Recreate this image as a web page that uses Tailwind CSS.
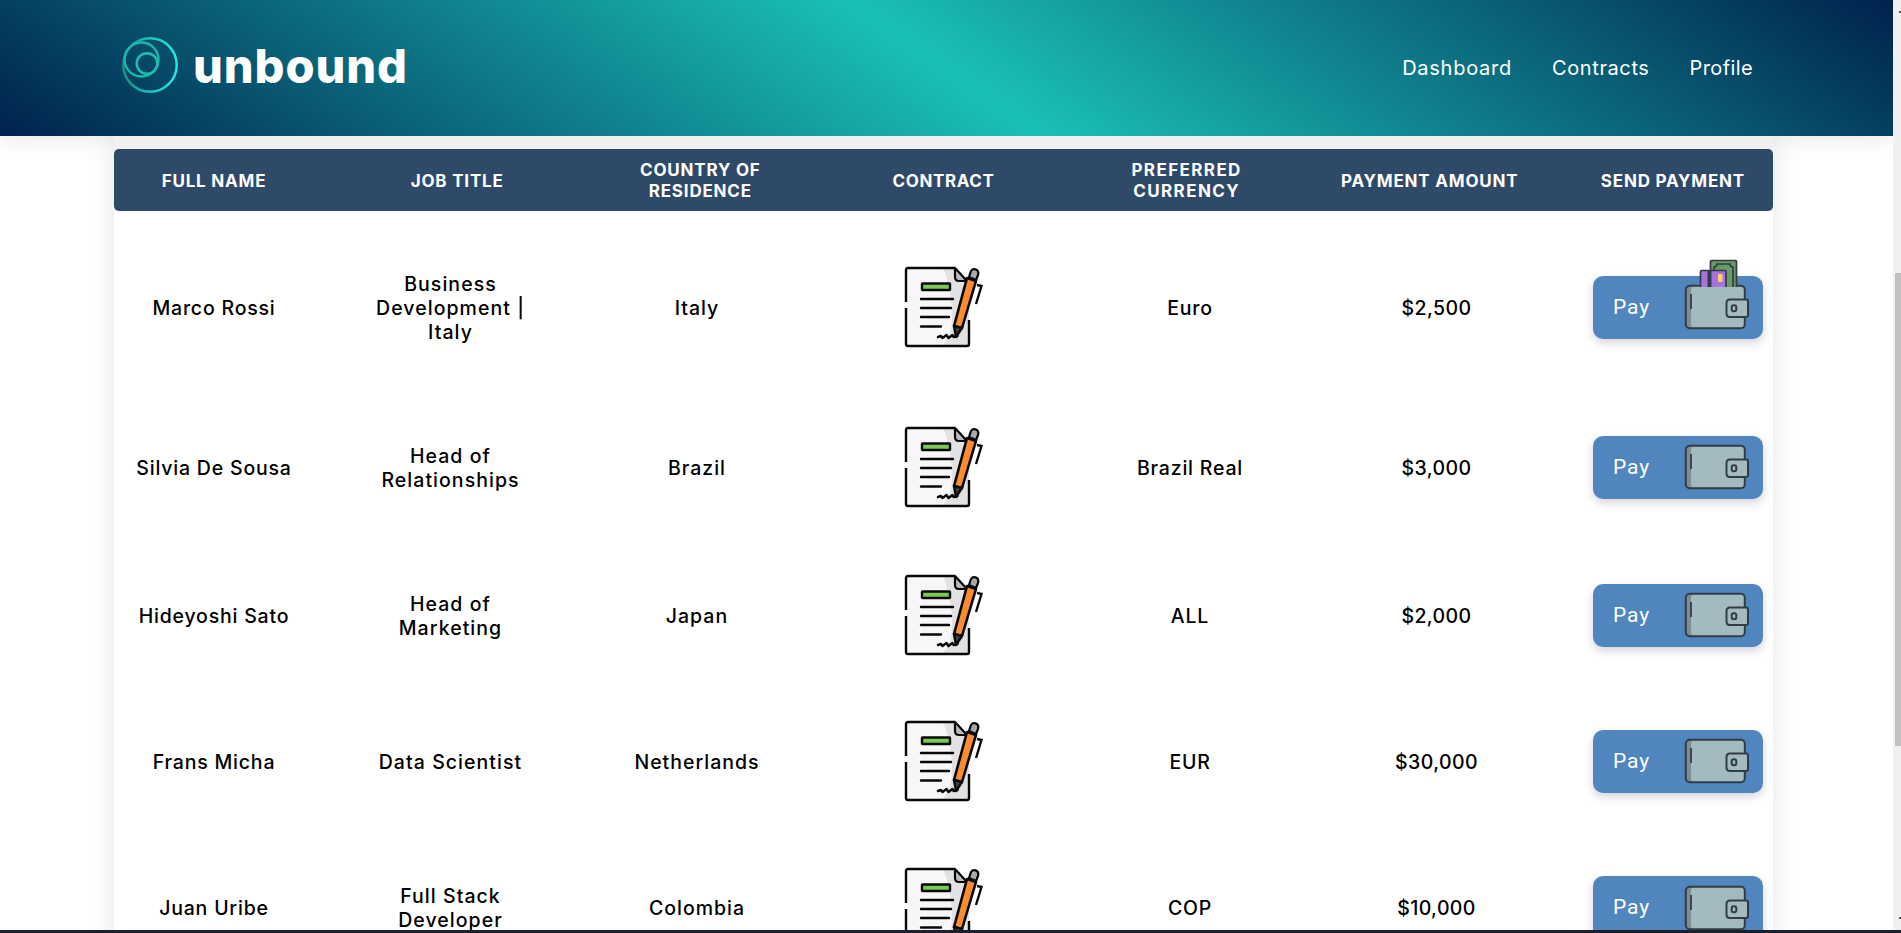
<!DOCTYPE html>
<html lang="en">
<head>
<meta charset="utf-8">
<title>unbound</title>
<script src="https://cdn.jsdelivr.net/npm/@tailwindcss/browser@4"></script>
</head>
<body class="h-[933px] overflow-hidden bg-white font-['Inter',sans-serif] text-black">
<svg class="hidden">
  <defs>
    <symbol id="contract" viewBox="0 0 84 84">
      <path d="M3 2H52L66 16V80H3Z" fill="#f8f6f8"/>
      <path d="M43 2H52L66 16V80H38Q50 72 49 46T40 2Z" fill="#e2e1e3"/>
      <path d="M3 36V4Q3 2 5 2H52M3 42V78Q3 80 5 80H64Q66 80 66 78V54" fill="none" stroke="#080808" stroke-width="2.4"/>
      <path d="M52 2V11Q52 15 56 15H64Z" fill="#bbb" stroke="#080808" stroke-width="2.2" stroke-linejoin="round"/>
      <rect x="19" y="17.500" width="28" height="6.500" rx="0.500" fill="#78cb52" stroke="#080808" stroke-width="2.4"/>
      <path d="M18 33H50M18 42H48M18 51H46M18 60.500H38" stroke="#080808" stroke-width="2.4" stroke-linecap="round"/>
      <path d="M35 71l3-1 1.500 2 4-3 2 3 4-3 1 2 4-1" fill="none" stroke="#080808" stroke-width="2.4" stroke-linecap="round" stroke-linejoin="round"/>
      <path d="M51 60L64 12L73 15L59 62Z" fill="#fb8d2e" stroke="#080808" stroke-width="2.6" stroke-linejoin="round"/>
      <path d="M51 60L59 62L53 71Z" fill="#444" stroke="#080808" stroke-width="2.4" stroke-linejoin="round"/>
      <path d="M66 11L68 5Q70 2 74 4Q76 6 75 9L73 14Z" fill="#aaa" stroke="#080808" stroke-width="2.2"/>
      <path d="M74 19L78.500 20L73 38" fill="none" stroke="#080808" stroke-width="2.400"/>
    </symbol>
    <symbol id="wallet" viewBox="0 0 66 46">
      <rect x="1.800" y="1.800" width="59" height="42.400" rx="4" fill="#a3bbc0"/>
      <path d="M9 2H5.800Q1.800 2 1.800 6V40Q1.800 44 5.800 44H9Q7 43 7 40V6Q7 3 9 2Z" fill="#7c8f91"/>
      <rect x="1.800" y="1.800" width="59" height="42.400" rx="4" fill="none" stroke="#323c45" stroke-width="2"/>
      <path d="M7 10V25" stroke="#323c45" stroke-width="1.800"/>
      <path d="M46 15.500H62Q64 15.500 64 17.500V31Q64 33 62 33H46Q42.500 33 42.500 29.500V19Q42.500 15.500 46 15.500Z" fill="#a3bbc0" stroke="#323c45" stroke-width="2"/>
      <rect x="47.700" y="21.300" width="4.600" height="6" rx="2" fill="none" stroke="#323c45" stroke-width="2"/>
    </symbol>
    <symbol id="cash" viewBox="0 0 40 28">
      <rect x="11.500" y="1.500" width="26" height="30" rx="1" fill="#699b64" stroke="#323c45" stroke-width="1.700"/>
      <path d="M15 12V8Q18 8 18 5H31Q31 8 34 8V28" fill="none" stroke="#323c45" stroke-width="1.700"/>
      <rect x="1.500" y="11.500" width="25.500" height="20" rx="1" fill="#a970e0" stroke="#323c45" stroke-width="1.700"/>
      <path d="M10.500 11V28" stroke="#323c45" stroke-width="4"/>
      <rect x="19" y="15" width="4.500" height="8" rx="1" fill="#fdd45c"/>
    </symbol>
  </defs>
</svg>

<div class="flex h-[930px] overflow-hidden">
  <div class="h-full w-[1893px] overflow-hidden">
    <nav class="relative flex h-[136px] items-center justify-between bg-[linear-gradient(35deg,#00224c_0%,#1ac0b7_50%,#00224c_100%)] pr-[140px] pl-[122px] text-white shadow-[0_0_25px_rgba(0,0,0,0.12)]">
      <div class="flex items-center">
        <svg class="mt-[-6px] h-[56px] w-[56px]" viewBox="0 0 56 56" fill="none" stroke-width="2.4">
          <defs><linearGradient id="ring"><stop stop-color="#159488"/><stop offset="1" stop-color="#22eee8"/></linearGradient></defs>
          <circle cx="28" cy="28" r="26.700" stroke="url(#ring)"/>
          <circle cx="19.500" cy="22.500" r="17" stroke="#1cb9ab"/>
          <circle cx="25" cy="26.500" r="10.300" stroke="#1cc0b3"/>
        </svg>
        <span class="-mt-[5px] ml-[15px] text-[47px] leading-none font-extrabold tracking-[0.9px]">unbound</span>
      </div>
      <div class="-mt-[1px] flex gap-[40px] text-[20px] tracking-[0.6px]">
        <a class="tracking-[0.75px]">Dashboard</a><a>Contracts</a><a class="tracking-[0.4px]">Profile</a>
      </div>
    </nav>
    <main class="ml-[114px] h-[850px] w-[1659px] shadow-[0_0_25px_rgba(0,0,0,0.1)]">
      <div class="relative bg-[#f0f0f0] pt-[13px]">
        <header class="flex h-[62px] items-center justify-between rounded-[5px] bg-[#2f4969] pt-[2px] text-center text-[17px] leading-[21px] font-bold tracking-[0.8px] text-white">
          <div class="w-[200px]">FULL NAME</div><div class="w-[200px]">JOB TITLE</div><div class="w-[200px]">COUNTRY OF<br>RESIDENCE</div><div class="w-[200px] tracking-[0.6px]">CONTRACT</div><div class="w-[200px] tracking-[1.4px]">PREFERRED<br>CURRENCY</div><div class="w-[200px]">PAYMENT AMOUNT</div><div class="w-[200px]">SEND PAYMENT</div>
        </header>
      </div>
      <div id="rows" class="-mt-[5px] bg-white pt-[17px] text-center text-[19.5px] leading-[24px] font-medium tracking-[0.8px]"></div>
    </main>
  </div>
  <div class="h-full w-[8px] bg-[#f0f0f0] pt-[11px]">
    <div class="ml-[6px] h-[2px] w-[2px] bg-[#505050]"></div>
    <div class="mt-[260px] ml-[2px] h-[473px] bg-[#c1c1c1]"></div>
    <div class="mt-[171px] ml-[6px] h-[2px] w-[2px] bg-[#505050]"></div>
  </div>
</div>
<div class="h-[3px] bg-[#1b202c]"></div>

<script>
const people = [
  ['Marco Rossi', 'Business<br>Development |<br>Italy', 'Italy', 'Euro', '$2,500', 'h-[168px]'],
  ['Silvia De Sousa', 'Head of<br>Relationships', 'Brazil', 'Brazil Real', '$3,000', 'h-[152px]'],
  ['Hideyoshi Sato', 'Head of<br>Marketing', 'Japan', 'ALL', '$2,000', 'h-[144px]'],
  ['Frans Micha', 'Data Scientist', 'Netherlands', 'EUR', '$30,000', 'h-[148px]'],
  ['Juan Uribe', 'Full Stack<br>Developer', 'Colombia', 'COP', '$10,000', 'h-[145px]'],
];
document.getElementById('rows').innerHTML = people.map(([name, job, country, currency, amount, height], i) => `
  <div class="grid grid-cols-[213px_247px_246px_247px_246px_247px_213px] items-center ${height}">
    <div class="pt-px pr-[13px]">${name}</div>
    <div class="pt-px tracking-[1.05px]">${job}</div>
    <div class="pt-px tracking-[1px]">${country}</div>
    <div class="flex justify-center pt-[2px] pl-[3px]"><svg class="h-[84px] w-[84px]"><use href="#contract"/></svg></div>
    <div class="pt-px">${currency}</div>
    <div class="pt-px tracking-[0.4px]">${amount}</div>
    <div class="flex justify-end pr-[10px]">
      <div class="relative flex h-[63px] w-[170px] items-center justify-between rounded-[10px] bg-[#5085be] pr-[13px] pl-[20px] font-['Roboto',sans-serif] text-[21px] font-normal tracking-[0.9px] text-white shadow-[0_4px_9px_rgba(60,60,110,0.22)]">
        <span class="-mt-px">Pay</span>
        <svg class="h-[46px] w-[66px]"><use href="#wallet"/></svg>
        ${i === 0 ? '<svg class="absolute -top-[17px] left-[106px] h-[28px] w-[40px]"><use href="#cash"/></svg>' : ''}
      </div>
    </div>
  </div>`).join('');
</script>
</body>
</html>
